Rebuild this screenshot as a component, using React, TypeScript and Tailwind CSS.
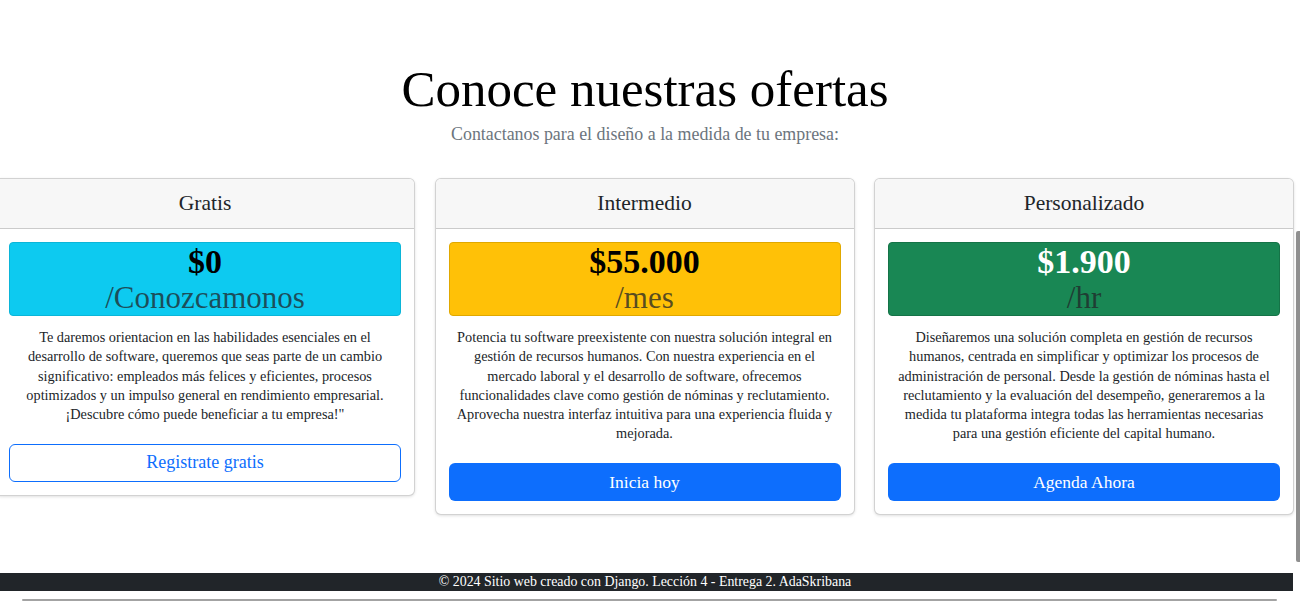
const OFFERS = [
  {
    id: "gratis",
    title: "Gratis",
    price: "$0",
    per: "/Conozcamonos",
    box: "bg-[#0dcaf0] border-[#0bb5d8]",
    priceColor: "text-black",
    lines: [
      "Te daremos orientacion en las habilidades esenciales en el",
      "desarrollo de software, queremos que seas parte de un cambio",
      "significativo: empleados más felices y eficientes, procesos",
      "optimizados y un impulso general en rendimiento empresarial.",
      "¡Descubre cómo puede beneficiar a tu empresa!\"",
    ],
    cta: "Registrate gratis",
    outline: true,
  },
  {
    id: "intermedio",
    title: "Intermedio",
    price: "$55.000",
    per: "/mes",
    box: "bg-[#ffc107] border-[#e0a800]",
    priceColor: "text-black",
    lines: [
      "Potencia tu software preexistente con nuestra solución integral en",
      "gestión de recursos humanos. Con nuestra experiencia en el",
      "mercado laboral y el desarrollo de software, ofrecemos",
      "funcionalidades clave como gestión de nóminas y reclutamiento.",
      "Aprovecha nuestra interfaz intuitiva para una experiencia fluida y",
      "mejorada.",
    ],
    cta: "Inicia hoy",
    outline: false,
  },
  {
    id: "personalizado",
    title: "Personalizado",
    price: "$1.900",
    per: "/hr",
    box: "bg-[#198754] border-[#157347]",
    priceColor: "text-white",
    lines: [
      "Diseñaremos una solución completa en gestión de recursos",
      "humanos, centrada en simplificar y optimizar los procesos de",
      "administración de personal. Desde la gestión de nóminas hasta el",
      "reclutamiento y la evaluación del desempeño, generaremos a la",
      "medida tu plataforma integra todas las herramientas necesarias",
      "para una gestión eficiente del capital humano.",
    ],
    cta: "Agenda Ahora",
    outline: false,
  },
];

function OfferCard({ offer }: { offer: (typeof OFFERS)[number] }) {
  return (
    <div className="w-[420px] shrink-0 bg-white border border-black/[0.175] rounded-[6px] shadow-[0_1px_3px_rgba(0,0,0,0.12)] overflow-hidden">
      <div className="h-[50px] bg-[#f7f7f7] border-b border-black/[0.175] flex items-center justify-center text-[21.5px] text-[#212529]">
        {offer.title}
      </div>
      <div className="p-[13px]">
        <div className={`border rounded-[4px] text-center ${offer.box}`}>
          <div className={`text-[34px] leading-[38px] font-bold ${offer.priceColor}`}>{offer.price}</div>
          <div className="text-[31px] leading-[34px] text-[#212529]/75">{offer.per}</div>
        </div>
        <p className="mt-[12px] text-center text-[14.3px] leading-[19.3px] text-[#212529] whitespace-nowrap">
          {offer.lines.map((l, i) => (
            <span key={i}>
              {l}
              {i < offer.lines.length - 1 && <br />}
            </span>
          ))}
        </p>
        {offer.outline ? (
          <button className="mt-[19.5px] w-full h-[38px] rounded-[6px] border border-[#0d6efd] text-[#0d6efd] text-[18px] bg-white">
            {offer.cta}
          </button>
        ) : (
          <button className="mt-[19.5px] w-full h-[38px] rounded-[6px] bg-[#0d6efd] text-white text-[17.5px]">
            {offer.cta}
          </button>
        )}
      </div>
    </div>
  );
}

export default function App() {
  return (
    <div className="relative h-[602px] overflow-hidden bg-white flex flex-col font-['Liberation_Serif',serif]">
      <section className="pt-[59px]">
        <div className="pr-[10px]">
          <h1 className="text-center text-[51px] leading-[61px] text-black">Conoce nuestras ofertas</h1>
          <p className="mt-[2px] text-center text-[17.9px] leading-[24px] text-[#6c757d]">
            Contactanos para el diseño a la medida de tu empresa:
          </p>
        </div>
        <div className="mt-[32px] ml-[-5px] flex items-start gap-[19.5px]">
          {OFFERS.map((o) => (
            <OfferCard key={o.id} offer={o} />
          ))}
        </div>
      </section>

      <footer className="mt-auto h-[18px] bg-[#212529] text-white text-[13.9px] leading-[18px] text-center mr-[7px] pr-[3px]">
        © 2024 Sitio web creado con Django. Lección 4 - Entrega 2. AdaSkribana
      </footer>
      <div className="h-[11px] bg-white flex items-end pb-[1px]">
        <div className="ml-[22px] w-[1255px] h-[2px] bg-[#a3a3a3] rounded-full" />
      </div>

      {/* browser scrollbar */}
      <div className="absolute right-0 top-[231px] w-[4px] h-[331px] bg-[#8f8f8f] rounded-l-[2px]" />
    </div>
  );
}
